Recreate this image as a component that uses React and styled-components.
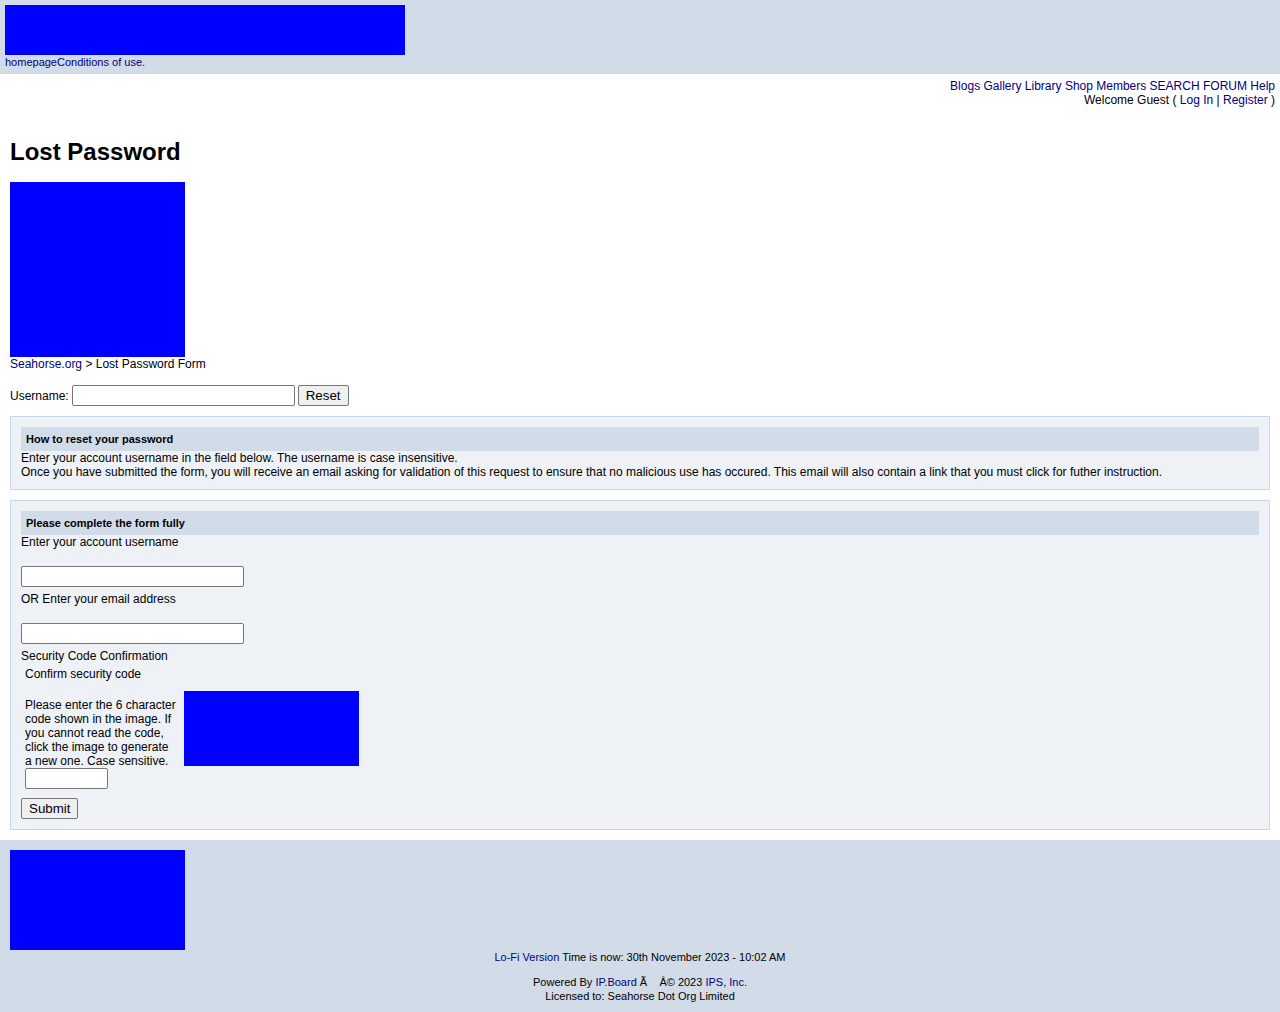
import styled, { createGlobalStyle } from "styled-components";

const GlobalStyle = createGlobalStyle`
  html, body {
    margin: 0;
    padding: 0;
    background: #ffffff;
    font-family: "Liberation Sans", Arial, sans-serif;
    color: #000000;
  }
  a {
    color: #000080;
    text-decoration: none;
  }
`;

const Header = styled.div`
  background: #d1dce8;
  padding: 5px 5px 5px 5px;
`;

const Placeholder = styled.div`
  flex-shrink: 0;
  background: #0000ff;
  width: ${(p) => p.w}px;
  height: ${(p) => p.h}px;
`;

const HeaderLinks = styled.div`
  font-size: 11px;
  line-height: 14px;
`;

const Nav = styled.div`
  text-align: right;
  font-size: 12px;
  line-height: 14px;
  padding: 5px 5px 0 5px;
`;

const Main = styled.div`
  padding: 0 10px 10px 10px;
`;

const Title = styled.h1`
  font-size: 24px;
  line-height: 28px;
  font-weight: bold;
  margin: 31px 0 16px 0;
`;

const Crumbs = styled.div`
  font-size: 12px;
  line-height: 14px;
`;

const InlineForm = styled.div`
  display: flex;
  align-items: center;
  gap: 3px;
  margin-top: 14px;
  font-size: 12px;
`;

const TextInput = styled.input`
  box-sizing: border-box;
  display: ${(p) => (p.block ? "block" : "inline-block")};
  width: ${(p) => p.w}px;
  height: 21px;
  border: 1px solid #767676;
  border-radius: 2px;
  background: #ffffff;
  padding: 1px 2px;
  font-family: "Liberation Sans", Arial, sans-serif;
  font-size: 13px;
  margin: 0;
`;

const Button = styled.button`
  box-sizing: border-box;
  height: 21px;
  padding: 1px 7px;
  font-family: "Liberation Sans", Arial, sans-serif;
  font-size: 13.33px;
  background: #efefef;
  border: 1px solid #767676;
  border-radius: 2px;
  color: #000;
  margin: 0;
`;

const Panel = styled.div`
  margin-top: 10px;
  background: #eef2f7;
  border: 1px solid #c9d6e6;
  padding: 10px;
  font-size: 12px;
  line-height: 14px;
`;

const PanelTitle = styled.div`
  background: #d1dce8;
  height: 24px;
  line-height: 24px;
  padding: 0 5px;
  font-size: 11px;
  font-weight: bold;
`;

const Field = styled.div`
  margin-top: ${(p) => p.mt || 0}px;
  padding-left: ${(p) => p.pl || 0}px;
`;

const CaptchaRow = styled.div`
  display: flex;
  align-items: flex-start;
  gap: 6px;
  margin-top: 10px;
  padding-left: 4px;
`;

const CaptchaText = styled.div`
  flex-shrink: 0;
  width: 153px;
  padding-top: 7px;
`;

const Footer = styled.div`
  background: #d1dce8;
  padding: 10px 10px 9px 10px;
  font-size: 11px;
  line-height: 14px;
`;

const FooterLine = styled.div`
  text-align: center;
  margin-top: ${(p) => p.mt || 0}px;
`;

export default function App() {
  return (
    <>
      <GlobalStyle />
      <Header>
        <Placeholder w={400} h={50} />
        <HeaderLinks>
          <a href="#">homepage</a>
          <a href="#">Conditions of use.</a>
        </HeaderLinks>
      </Header>

      <Nav>
        <div>
          <a href="#">Blogs</a> <a href="#">Gallery</a> <a href="#">Library</a>{" "}
          <a href="#">Shop</a> <a href="#">Members</a> <a href="#">SEARCH</a>{" "}
          <a href="#">FORUM</a> <a href="#">Help</a>
        </div>
        <div>
          Welcome Guest ( <a href="#">Log In</a> | <a href="#">Register</a> )
        </div>
      </Nav>

      <Main>
        <Title>Lost Password</Title>
        <Placeholder w={175} h={175} />
        <Crumbs>
          <a href="#">Seahorse.org</a> &gt; Lost Password Form
        </Crumbs>

        <InlineForm>
          Username:
          <TextInput w={223} type="text" />
          <Button>Reset</Button>
        </InlineForm>

        <Panel>
          <PanelTitle>How to reset your password</PanelTitle>
          <div>Enter your account username in the field below. The username is case insensitive.</div>
          <div>
            Once you have submitted the form, you will receive an email asking for validation of this
            request to ensure that no malicious use has occured. This email will also contain a link
            that you must click for futher instruction.
          </div>
        </Panel>

        <Panel>
          <PanelTitle>Please complete the form fully</PanelTitle>
          <Field>Enter your account username</Field>
          <Field mt={17}>
            <TextInput w={223} type="text" />
          </Field>
          <Field mt={5}>OR Enter your email address</Field>
          <Field mt={17}>
            <TextInput w={223} type="text" />
          </Field>
          <Field mt={5}>Security Code Confirmation</Field>
          <Field mt={4} pl={4}>Confirm security code</Field>
          <CaptchaRow>
            <CaptchaText>
              Please enter the 6 character code shown in the image. If you cannot read the code,
              click the image to generate a new one. Case sensitive.
              <TextInput w={83} type="text" block />
            </CaptchaText>
            <Placeholder w={175} h={75} />
          </CaptchaRow>
          <Field mt={9}>
            <Button>Submit</Button>
          </Field>
        </Panel>
      </Main>

      <Footer>
        <Placeholder w={175} h={100} />
        <FooterLine>
          <a href="#">Lo-Fi Version</a> Time is now: 30th November 2023 - 10:02 AM
        </FooterLine>
        <FooterLine mt={11}>
          Powered By <a href="#">IP.Board</a> Ã&nbsp;&nbsp;&nbsp; Â© 2023 <a href="#">IPS, Inc.</a>
        </FooterLine>
        <FooterLine>Licensed to: Seahorse Dot Org Limited</FooterLine>
      </Footer>
    </>
  );
}
